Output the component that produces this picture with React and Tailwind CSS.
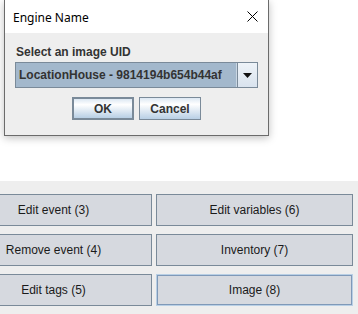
import React from "react";

const actions = [
  ["Edit event (3)", "Edit variables (6)"],
  ["Remove event (4)", "Inventory (7)"],
  ["Edit tags (5)", "Image (8)"],
];

function ActionButton({ label, focused }) {
  return (
    <button
      className={
        "w-[197px] h-[32px] bg-[#d6d9df] text-[12px] text-[#1a1a1a] flex items-center justify-center " +
        (focused
          ? "border border-[#b8cfe5] shadow-[inset_0_0_0_1px_#7f99b8]"
          : "border border-[#7a8a99]")
      }
    >
      {label}
    </button>
  );
}

function DialogButton({ label, focused }) {
  return (
    <button
      className={
        "w-[62px] h-[23px] bg-[linear-gradient(180deg,#dde8f3_0%,#ffffff_30%,#b8cfe5_100%)] text-[12px] font-bold text-[#333] flex items-center justify-center " +
        (focused ? "border-2 border-[#7a8a99]" : "border border-[#7a8a99]")
      }
    >
      {label}
    </button>
  );
}

export default function App() {
  return (
    <div className="w-[358px] h-[314px] bg-white overflow-hidden font-['Liberation_Sans',Arial,sans-serif]">
      {/* Dialog window */}
      <div className="h-[181px] pl-[4px]">
        <div className="w-[265px] h-[136px] border-x border-b border-[#6b6b6b] bg-[#eeeeee] shadow-[0_2px_8px_rgba(0,0,0,0.25)] flex flex-col">
          <div className="h-[33px] bg-white flex items-center justify-between pt-[3px] pl-[8px] pr-[10px]">
            <span className="text-[12px] text-black font-['Noto_Sans',sans-serif]">Engine Name</span>
            <svg width="11" height="11" viewBox="0 0 11 11" className="mb-[3px]">
              <path d="M0.5 0.5 L10.5 10.5 M10.5 0.5 L0.5 10.5" stroke="#000" strokeWidth="1" fill="none" />
            </svg>
          </div>
          <div className="pl-[10px] pt-[12px]">
            <div className="text-[12px] font-bold text-[#333] leading-[14px] pl-[1px]">Select an image UID</div>
            <div className="mt-[3px] w-[243px] h-[26px] border border-[#7a8a99] flex">
              <div className="flex-1 bg-[#a3b8cc] flex items-center pl-[3px] text-[12px] font-bold text-[#333] border-r border-[#c9d6e3]">
                LocationHouse - 9814194b654b44af
              </div>
              <div className="w-[20px] bg-[linear-gradient(180deg,#eef3f8,#d9e3ee)] border-l border-[#7a8a99] flex items-center justify-center">
                <svg width="9" height="5" viewBox="0 0 9 5">
                  <path d="M0 0 H9 L4.5 5 Z" fill="#111" />
                </svg>
              </div>
            </div>
            <div className="mt-[9px] flex justify-center gap-[5px] pr-[10px]">
              <DialogButton label="OK" focused />
              <DialogButton label="Cancel" />
            </div>
          </div>
        </div>
      </div>

      {/* Action panel */}
      <div className="h-[133px] bg-[#eeeeee] pt-[13px]">
        <div className="ml-[-45px] flex flex-col gap-[8px]">
          {actions.map(([left, right]) => (
            <div key={left} className="flex gap-[4px]">
              <ActionButton label={left} />
              <ActionButton label={right} focused={right === "Image (8)"} />
            </div>
          ))}
        </div>
      </div>
    </div>
  );
}
